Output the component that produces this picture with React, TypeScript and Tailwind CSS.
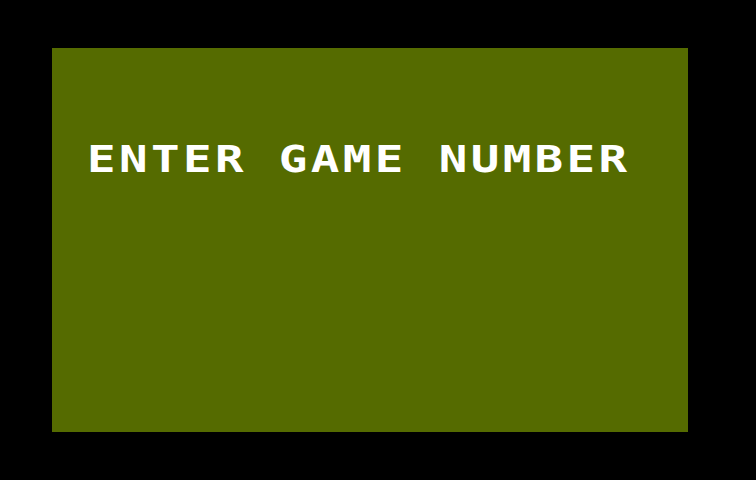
const App = () => {
  return (
    <div className="w-[756px] h-[480px] bg-black pt-[48px] pl-[52px]">
      <div className="w-[636px] h-[384px] bg-[#556b00] pt-[92px] pl-[35px]">
        {/* wide, blocky lettering in the style of an 8-bit character set */}
        <p
          className="inline-block text-white text-[38px] leading-none font-bold tracking-[2.7px] whitespace-nowrap origin-left scale-x-125"
          style={{ fontFamily: '"DejaVu Sans Mono", monospace' }}
        >
          ENTER GAME NUMBER
        </p>
      </div>
    </div>
  );
};

export default App;
